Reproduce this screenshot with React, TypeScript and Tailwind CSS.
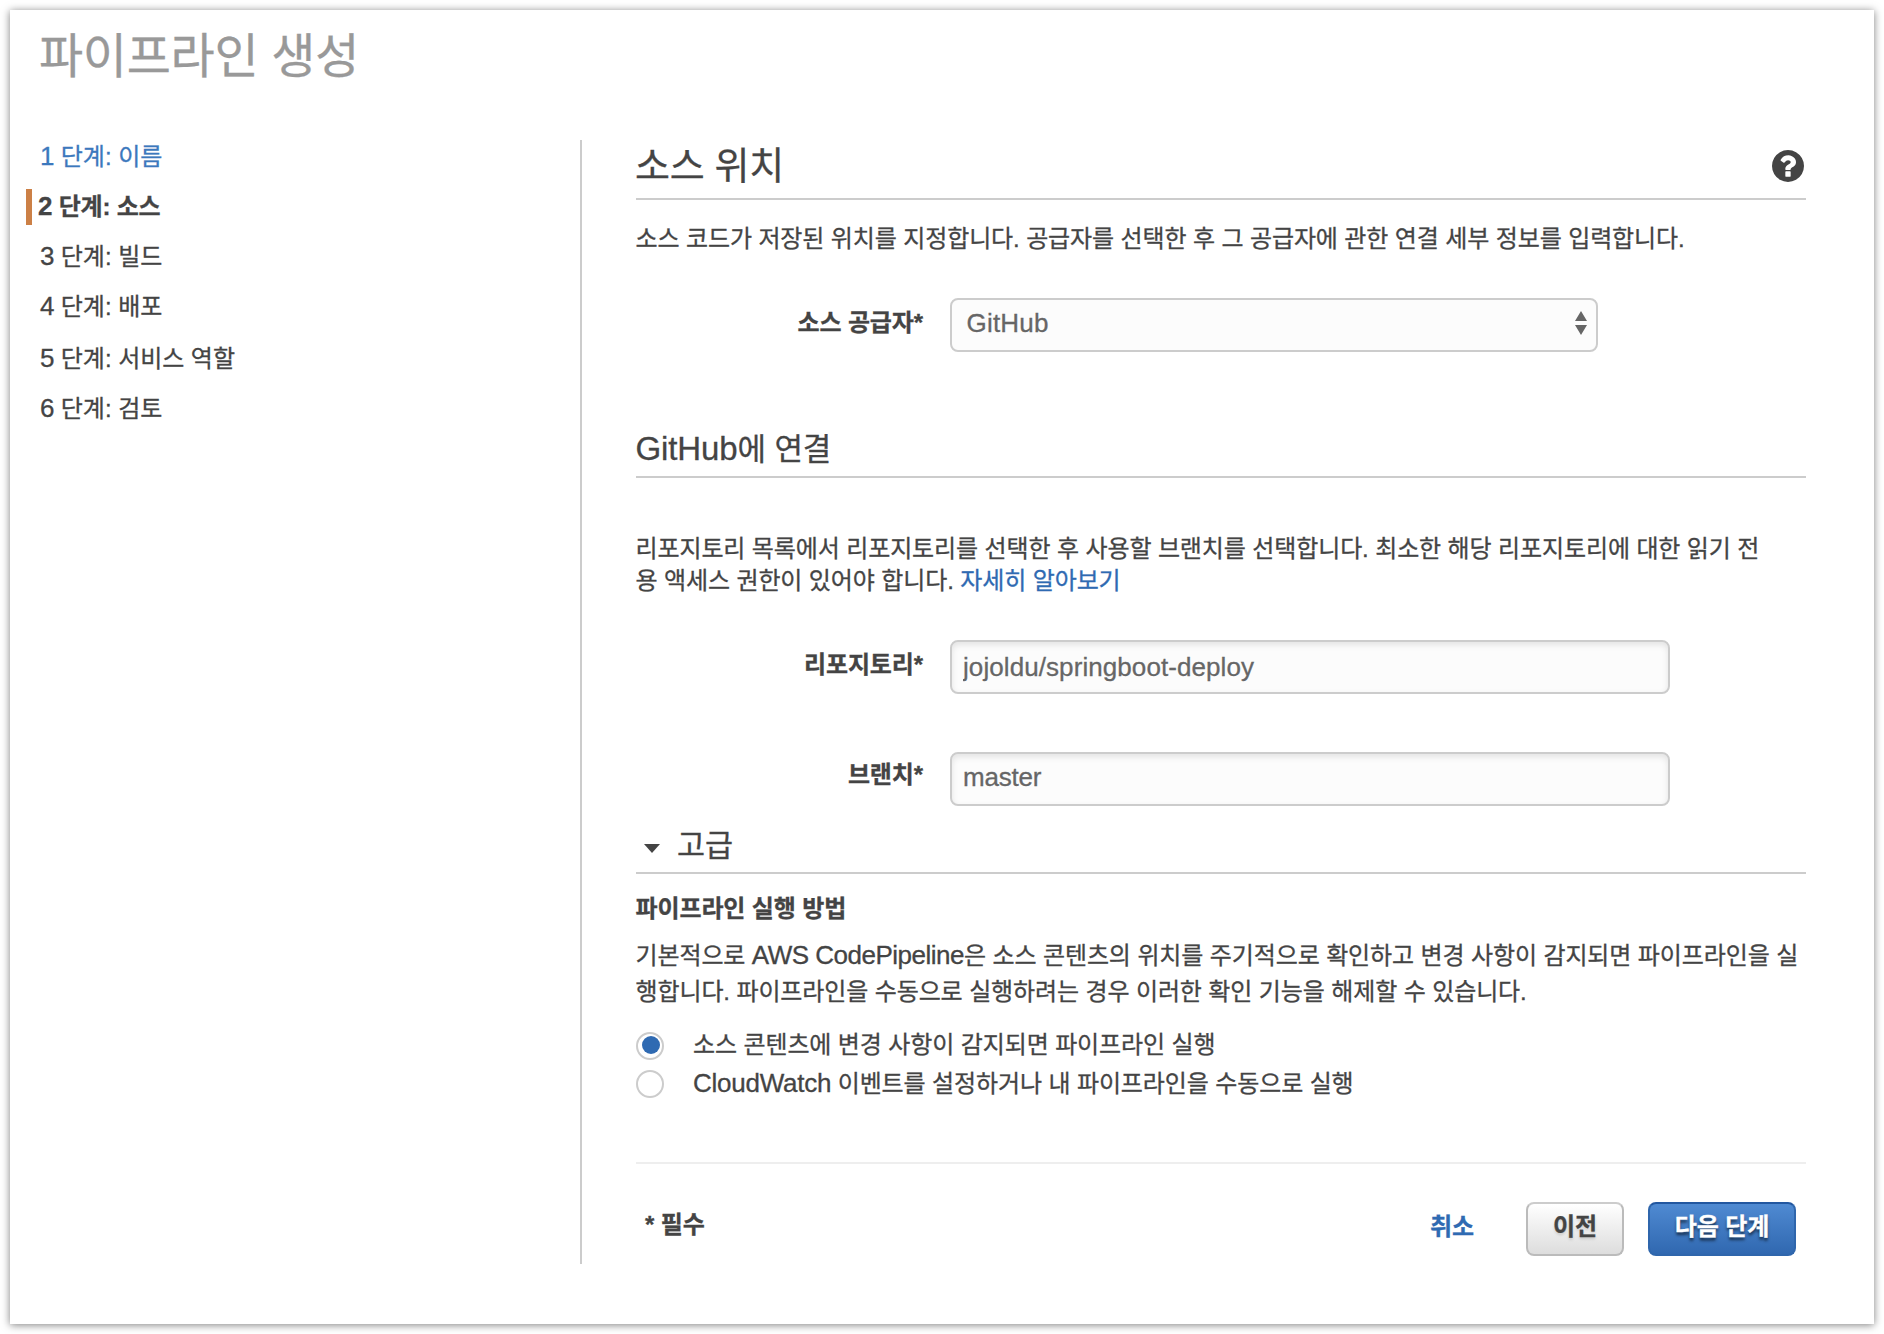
import type { ReactNode } from "react";

const steps = ["이름", "소스", "빌드", "배포", "서비스 역할", "검토"];

/** Latin run set slightly larger than the surrounding Hangul. */
function Latin({ children }: { children: ReactNode }) {
  return <span className="text-[26px] tracking-[-0.25px]">{children}</span>;
}

function HelpIcon() {
  return (
    <svg className="mr-0.5 mt-[-7px] size-8" viewBox="128 128 1536 1536" fill="currentColor">
      <path d="M1024 1376v-192q0-14-9-23t-23-9h-192q-14 0-23 9t-9 23v192q0 14 9 23t23 9h192q14 0 23-9t9-23zm256-672q0-88-55.500-163t-138.500-116-170-41q-243 0-371 213-15 24 8 42l132 100q7 6 19 6 16 0 25-12 53-68 86-92 34-24 86-24 48 0 85.500 26t37.500 59q0 38-20 61t-68 45q-63 28-115.500 86.500t-52.500 125.500v36q0 14 9 23t23 9h192q14 0 23-9t9-23q0-19 21.500-49.500t54.500-49.500q32-18 49-28.500t46-35 44.500-48 28-60.500 12.500-81zm384 192q0 209-103 385.500t-279.500 279.500-385.500 103-385.500-103-279.500-279.500-103-385.500 103-385.500 279.500-279.500 385.500-103 385.500 103 279.500 279.500 103 385.500z" />
    </svg>
  );
}

function Step({ index, name }: { index: number; name: string }) {
  if (index === 2) {
    return (
      <li className="-ml-3.5 flex h-[50px] items-center">
        <span className="mr-1.5 mt-0.5 h-9 w-1.5 bg-[#cc8046]" />
        <span className="font-bold tracking-[-0.2px]">
          <Latin>{index}</Latin> 단계: {name}
        </span>
      </li>
    );
  }
  return (
    <li
      className={`h-[50px] leading-[50px] tracking-[-0.05px] ${index === 1 ? "text-[#3c78bd]" : ""} ${index === 5 ? "mt-0.5" : ""}`}
    >
      <Latin>{index}</Latin> 단계: {name}
    </li>
  );
}

function Field({ label, raised, children }: { label: string; raised?: boolean; children: ReactNode }) {
  return (
    <div className="flex h-[54px]">
      <label className={`w-[287px] text-right font-bold ${raised ? "leading-[46px]" : "leading-[50px]"}`}>
        {label}
      </label>
      <div className="ml-[27px]">{children}</div>
    </div>
  );
}

function TextInput({ value, raised }: { value: string; raised?: boolean }) {
  return (
    <input
      readOnly
      value={value}
      className={`block h-[54px] w-[720px] rounded-lg border-2 border-[#ccc] bg-[#fcfcfc] px-[11px] text-[26px] text-[#666] shadow-[inset_0_3px_6px_rgba(0,0,0,0.1)] outline-none ${raised ? "pb-[3px] tracking-[-0.2px]" : "tracking-[0.08px]"}`}
    />
  );
}

function Radio({ checked, children }: { checked?: boolean; children: ReactNode }) {
  return (
    <div className="flex h-[38px] items-center">
      <span className="flex size-7 items-center justify-center rounded-full border-2 border-[#ccc] bg-white">
        {checked && <span className="mb-0.5 ml-0.5 size-[18px] rounded-full bg-[#2f6ab2]" />}
      </span>
      <span className="ml-[29px] pb-0.5">{children}</span>
    </div>
  );
}

export default function App() {
  return (
    <div className="h-[1334px] w-[1884px] overflow-hidden bg-white p-2.5 font-['Liberation_Sans','Noto_Sans_CJK_KR',sans-serif] text-[24px] tracking-[-0.12px] text-[#444] [-webkit-text-stroke:0.3px]">
      <div className="h-[1314px] w-[1864px] bg-white shadow-[0_1px_8px_rgba(0,0,0,0.5)]">
        <h1 className="h-[130px] pl-[29px] pt-[17px] text-[48px] leading-[60px] tracking-[-0.3px] text-[#999]">
          파이프라인 생성
        </h1>

        <div className="flex">
          <nav className="h-[1124px] w-[572px] border-r-2 border-[#ccc] pl-[30px]">
            <ol className="-mt-[9px]">
              {steps.map((name, i) => (
                <Step key={name} index={i + 1} name={name} />
              ))}
            </ol>
          </nav>

          <main className="ml-[54px] w-[1170px]">
            <div className="flex h-[60px] items-center justify-between border-b-2 border-[#ccc]">
              <h2 className="-ml-px pb-1.5 text-[38px] tracking-[-0.3px]">소스 위치</h2>
              <HelpIcon />
            </div>
            <p className="-ml-[0.5px] mt-[19px] leading-[40px]">
              소스 코드가 저장된 위치를 지정합니다. 공급자를 선택한 후 그 공급자에 관한 연결 세부 정보를 입력합니다.
            </p>

            <div className="mt-[39px]">
              <Field label="소스 공급자*">
                <div className="flex h-[54px] w-[648px] items-center justify-between rounded-lg border-2 border-[#ccc] bg-[#fcfcfc] pl-[14.5px] pr-[9px] text-[26px] tracking-[0.2px] text-[#666]">
                  <span className="pb-1">GitHub</span>
                  <svg className="mb-1 h-6 w-3" viewBox="0 0 12 24" fill="#666">
                    <path d="M6 0l6 10H0zM6 24l6-10H0z" />
                  </svg>
                </div>
              </Field>
            </div>

            <h3 className="mt-[74px] h-[52px] border-b-2 border-[#ccc] text-[31px] leading-[45px]">
              <span className="-ml-[0.5px] text-[33px]">GitHub</span>에 연결
            </h3>

            <p className="-ml-[0.5px] mt-[55px] leading-8">
              리포지토리 목록에서 리포지토리를 선택한 후 사용할 브랜치를 선택합니다. 최소한 해당 리포지토리에 대한 읽기 전
              <br />용 액세스 권한이 있어야 합니다. <a className="text-[#2f6ab2]">자세히 알아보기</a>
            </p>

            <div className="mt-[43px] flex flex-col gap-[58px]">
              <Field label="리포지토리*">
                <TextInput value="jojoldu/springboot-deploy" />
              </Field>
              <Field label="브랜치*" raised>
                <TextInput value="master" raised />
              </Field>
            </div>

            <div className="mt-[14px] flex h-[54px] items-center border-b-2 border-[#ccc] pl-2">
              <svg className="mt-1 h-[9px] w-4" viewBox="0 0 16 9" fill="#444">
                <path d="M0 0h16L8 9z" />
              </svg>
              <h3 className="ml-[17px] pb-0.5 text-[30.5px] leading-[44px]">고급</h3>
            </div>

            <h4 className="-ml-[0.5px] mt-[15px] font-bold leading-[40px]">파이프라인 실행 방법</h4>
            <p className="-ml-[0.5px] mt-2 whitespace-nowrap leading-9">
              기본적으로 <span className="text-[26px] tracking-[-0.5px]">AWS CodePipeline</span>은 소스 콘텐츠의 위치를 주기적으로 확인하고 변경 사항이 감지되면 파이프라인을 실
              <br />
              행합니다. 파이프라인을 수동으로 실행하려는 경우 이러한 확인 기능을 해제할 수 있습니다.
            </p>

            <div className="mt-[17px]">
              <Radio checked>소스 콘텐츠에 변경 사항이 감지되면 파이프라인 실행</Radio>
              <Radio>
                <Latin>CloudWatch</Latin> 이벤트를 설정하거나 내 파이프라인을 수동으로 실행
              </Radio>
            </div>

            <div className="mt-[59px] flex border-t-2 border-[#eee] pl-[9px] pr-2.5 pt-[38px] font-bold">
              <span className="leading-[46px]">* 필수</span>
              <a className="ml-auto leading-[50px] text-[#2f6ab2]">취소</a>
              <button className="ml-[52px] h-[54px] w-[98px] rounded-lg border-2 border-[#bbb] border-t-[#ccc] bg-gradient-to-b from-white to-[#ddd] pb-1 [text-shadow:0_2px_3px_rgba(0,0,0,0.15)]">
                이전
              </button>
              <button className="ml-6 h-[54px] w-[148px] rounded-lg border-2 border-[#2f66ac] border-t-[#2257a0] bg-gradient-to-b from-[#4f8ad2] to-[#3068b0] pb-1 text-white [text-shadow:0_3px_3px_rgba(0,0,0,0.6)]">
                다음 단계
              </button>
            </div>
          </main>
        </div>
      </div>
    </div>
  );
}
